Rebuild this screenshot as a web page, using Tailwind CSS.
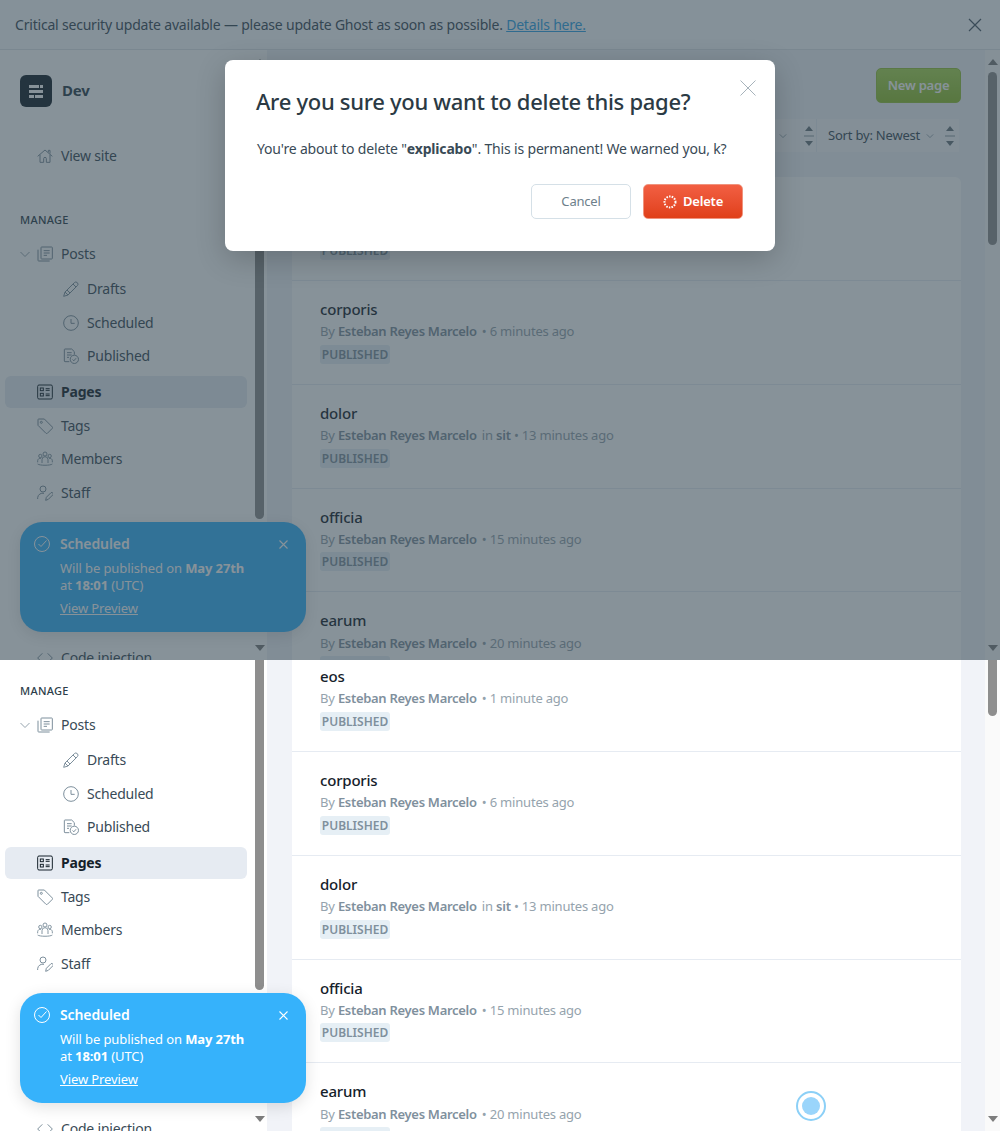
<!DOCTYPE html>
<html lang="en">
<head>
	<meta charset="UTF-8">
	<meta name="viewport" content="width=device-width, initial-scale=1.0">
	<script src="https://cdn.jsdelivr.net/npm/@tailwindcss/browser@4"></script>
	<title>Ghost Admin - Pages</title>
</head>
<body class="bg-white w-[1000px] font-['Noto_Sans','Open_Sans',sans-serif] tracking-[-0.2px] text-[#394a56]">

<!-- Top half: page with the delete modal open -->
<section class="relative h-[660px] overflow-hidden">
	<div id="page" class="h-[660px] flex flex-col">
		<!-- Update banner -->
		<div class="h-[50px] shrink-0 flex items-center justify-between pl-[15px] pr-[18px] bg-[#f9fcff] border-b border-[#dfe5ea] text-sm">
			<p>Critical security update available — please update Ghost as soon as possible. <a class="text-[#30a3e6] underline">Details here.</a></p>
			<svg class="w-[14px] h-[14px]" viewBox="0 0 14 14" fill="none" stroke="#4a5a66" stroke-width="1.2"><path d="M1 1l12 12M13 1L1 13"/></svg>
		</div>

		<div class="flex flex-1 min-h-0">
			<!-- Sidebar -->
			<aside class="w-[267px] shrink-0 flex bg-white">
				<nav class="w-[252px] overflow-hidden text-sm">
					<div class="flex items-center gap-[10px] pl-5 pt-[25px]">
						<div class="w-8 h-8 rounded-md bg-[#15212a] flex flex-col justify-center items-center gap-[2px]">
							<span class="flex gap-[1px]"><i class="block w-[10px] h-[3px] bg-white"></i><i class="block w-[3px] h-[3px] bg-white"></i></span>
							<span class="block w-[14px] h-[3px] bg-white"></span>
							<span class="flex gap-[1px]"><i class="block w-[5px] h-[3px] bg-white"></i><i class="block w-[8px] h-[3px] bg-white"></i></span>
						</div>
						<span class="text-[15px] font-bold text-[#2d3e4a]">Dev</span>
					</div>

					<a class="mt-8 h-[33px] flex items-center gap-2 pl-[37px]">
						<svg class="w-4 h-4" viewBox="0 0 24 24" fill="none" stroke="#7d8f9c" stroke-width="1.5"><path d="M1 12.500L12 3l11 9.500M4.500 10v11.500H10V16a2 2 0 0 1 4 0v5.500h5.500V10M17 6.500V3.500h2.500V8.500"/></svg>
						View site
					</a>

					<p class="mt-10 pl-5 h-4 leading-4 text-[11px] font-medium tracking-[0.3px] uppercase text-[#2d3e4a]">Manage</p>

					<a class="mt-[9px] h-[33px] flex items-center pl-5">
						<svg class="w-[10px] h-[10px] mr-[7px]" viewBox="0 0 10 10" fill="none" stroke="#95a3ad"><path d="M.5 3l4.500 4.500L9.500 3"/></svg>
						<svg class="w-4 h-4 mr-2" viewBox="0 0 24 24" fill="none" stroke="#7d8f9c" stroke-width="1.5"><rect x="6" y="1.500" width="17" height="18" rx="1"/><path d="M1.500 5.500V21.500a1 1 0 0 0 1 1H19M10 7h9M10 10.500h9M10 14h5"/></svg>
						Posts
					</a>
					<a class="mt-[2px] h-[33px] flex items-center gap-2 pl-[63px]">
						<svg class="w-4 h-4" viewBox="0 0 24 24" fill="none" stroke="#7d8f9c" stroke-width="1.5"><path d="M1 23l2-6.500L17 2.500a3 3 0 0 1 4.500 4.500L7.500 21zM15 4.500L19.500 9M3 16.500L7.500 21M6 13.500L10.500 18"/></svg>
						Drafts
					</a>
					<a class="mt-px h-[33px] flex items-center gap-2 pl-[63px]">
						<svg class="w-4 h-4" viewBox="0 0 24 24" fill="none" stroke="#7d8f9c" stroke-width="1.5"><circle cx="12" cy="12" r="11"/><path d="M12 6v6.500h5.500"/></svg>
						Scheduled
					</a>
					<a class="h-[33px] flex items-center gap-2 pl-[63px]">
						<svg class="w-4 h-4" viewBox="0 0 24 24" fill="none" stroke="#7d8f9c" stroke-width="1.5"><path d="M9.500 20.500H3a1 1 0 0 1-1-1V2.500a1 1 0 0 1 1-1h10l4 4V10M6 7h7M6 10.500h7M6 14h3"/><circle cx="17" cy="17" r="6.200"/><path d="M14.300 17.300l2 1.900 3.200-3.800"/></svg>
						Published
					</a>
					<a class="mt-[4px] ml-[5px] w-[242px] h-8 flex items-center gap-2 pl-8 rounded-md bg-[#e6ebf2] font-bold text-[#15212a]">
						<svg class="w-4 h-4" viewBox="0 0 24 24" fill="none" stroke="#15212a" stroke-width="1.5"><rect x="1" y="1.500" width="22" height="21" rx="2"/><rect x="5" y="6" width="4.500" height="4"/><rect x="5" y="14" width="4.500" height="4"/><path d="M13 7h6M13 9.500h6M13 15h6M13 17.500h6"/></svg>
						Pages
					</a>
					<a class="mt-px h-[33px] flex items-center gap-2 pl-[37px]">
						<svg class="w-4 h-4" viewBox="0 0 24 24" fill="none" stroke="#7d8f9c" stroke-width="1.5"><path d="M2.500 1.500h8.500L23 13.500a1.500 1.500 0 0 1 0 2L15.500 23a1.500 1.500 0 0 1-2 0L1.500 11V2.500a1 1 0 0 1 1-1z"/><circle cx="6.500" cy="6.500" r="1.500"/></svg>
						Tags
					</a>
					<a class="h-[33px] flex items-center gap-2 pl-[37px]">
						<svg class="w-4 h-4" viewBox="0 0 24 24" fill="none" stroke="#7d8f9c" stroke-width="1.4"><circle cx="12" cy="4.500" r="3"/><circle cx="5" cy="7.500" r="2.500"/><circle cx="19" cy="7.500" r="2.500"/><path d="M7.500 18v-5a4.500 4.500 0 0 1 9 0v5M1 17v-2.500a4 4 0 0 1 5-3.500M23 17v-2.500a4 4 0 0 0-5-3.500M1 19.500c3 2.500 19 2.500 22 0"/></svg>
						Members
					</a>
					<a class="mt-px h-[33px] flex items-center gap-2 pl-[37px]">
						<svg class="w-4 h-4" viewBox="0 0 24 24" fill="none" stroke="#7d8f9c" stroke-width="1.5"><circle cx="9" cy="6" r="4.500"/><path d="M1 21v-2a7.500 7.500 0 0 1 9.500-6.500M13 23l1-4.500 7-7a2.200 2.200 0 0 1 3 3l-7 7z"/></svg>
						Staff
					</a>
					<a class="mt-[132px] h-[33px] flex items-center gap-2 pl-[37px]">
						<svg class="w-4 h-4" viewBox="0 0 24 24" fill="none" stroke="#7d8f9c" stroke-width="1.5"><path d="M8 5l-7 7 7 7M16 5l7 7-7 7"/></svg>
						Code injection
					</a>
				</nav>
				<div class="w-[15px] shrink-0 flex flex-col items-center">
					<svg class="mt-[9px] w-[10px] h-[6px]" viewBox="0 0 10 6" fill="#7d7d7d"><path d="M5 0l5 6H0z"/></svg>
					<div class="mt-[7px] w-[9px] h-[447px] rounded-full bg-[#8e8e8e]"></div>
					<svg class="mt-auto mb-[9px] w-[10px] h-[6px]" viewBox="0 0 10 6" fill="#7d7d7d"><path d="M5 6l5-6H0z"/></svg>
				</div>
			</aside>

			<!-- Main -->
			<main class="flex-1 min-w-0 bg-[#f1f3f8] pl-[25px] pr-[24px] overflow-hidden">
				<div class="mt-[18px] h-[35px] flex items-center justify-between">
					<h1 class="text-2xl font-bold text-[#15212a]">Pages</h1>
					<button class="w-[85px] h-[35px] rounded-[5px] border border-[#94c23a] bg-gradient-to-b from-[#a9d850] to-[#8fbe2c] text-white text-[13px] font-semibold">New page</button>
				</div>
				<div class="mt-4 h-[33px] flex justify-end pr-[2px] text-[13px]">
					<div class="w-[142px] flex items-center justify-between pl-[51px] pr-[2px] bg-[#f7f8fb] border-r border-[#e6ebf2] whitespace-nowrap">
						<span class="flex items-center gap-[10px]">All tags
							<svg class="w-2 h-2" viewBox="0 0 10 10" fill="none" stroke="#95a3ad" stroke-width="1.2"><path d="M1 3l4 4 4-4"/></svg>
						</span>
						<svg class="w-[10px] h-[22px]" viewBox="0 0 10 22" fill="#69757d"><path d="M5 1l4 5H1zM5 21l4-5H1z"/><path d="M0 11h10" stroke="#8d99a1"/></svg>
					</div>
					<div class="w-[142px] flex items-center justify-between pl-[11px] pr-[4px] bg-[#f7f8fb]">
						<span class="flex items-center gap-[6px]">Sort by: Newest
							<svg class="w-2 h-2" viewBox="0 0 10 10" fill="none" stroke="#95a3ad" stroke-width="1.2"><path d="M1 3l4 4 4-4"/></svg>
						</span>
						<svg class="w-[10px] h-[22px]" viewBox="0 0 10 22" fill="#69757d"><path d="M5 1l4 5H1zM5 21l4-5H1z"/><path d="M0 11h10" stroke="#8d99a1"/></svg>
					</div>
				</div>
				<ul class="mt-[25px] bg-white rounded-t-md">
					<li class="h-[104px] pl-7 pt-[17px] border-b border-[#e6ebf2]">
						<h3 class="text-[15px] leading-[22px] font-medium text-[#15212a]">eos</h3>
						<p class="mt-[1px] text-[13px] leading-[20px] text-[#95a3ad]">By <b class="mr-[2px] font-semibold tracking-[-0.3px] text-[#7f909d]">Esteban Reyes Marcelo</b> • 1 minute ago</p>
						<span class="mt-[4px] block w-[70px] h-[19px] leading-[19px] text-center rounded-[3px] bg-[#e6eff5] text-xs font-semibold tracking-normal text-[#7f909d]">PUBLISHED</span>
					</li>
					<li class="h-[104px] pl-7 pt-[17px] border-b border-[#e6ebf2]">
						<h3 class="text-[15px] leading-[22px] font-medium text-[#15212a]">corporis</h3>
						<p class="mt-[1px] text-[13px] leading-[20px] text-[#95a3ad]">By <b class="mr-[2px] font-semibold tracking-[-0.3px] text-[#7f909d]">Esteban Reyes Marcelo</b> • 6 minutes ago</p>
						<span class="mt-[4px] block w-[70px] h-[19px] leading-[19px] text-center rounded-[3px] bg-[#e6eff5] text-xs font-semibold tracking-normal text-[#7f909d]">PUBLISHED</span>
					</li>
					<li class="h-[104px] pl-7 pt-[17px] border-b border-[#e6ebf2]">
						<h3 class="text-[15px] leading-[22px] font-medium text-[#15212a]">dolor</h3>
						<p class="mt-[1px] text-[13px] leading-[20px] text-[#95a3ad]">By <b class="mr-[2px] font-semibold tracking-[-0.3px] text-[#7f909d]">Esteban Reyes Marcelo</b> in <b class="font-semibold text-[#7f909d]">sit</b> • 13 minutes ago</p>
						<span class="mt-[4px] block w-[70px] h-[19px] leading-[19px] text-center rounded-[3px] bg-[#e6eff5] text-xs font-semibold tracking-normal text-[#7f909d]">PUBLISHED</span>
					</li>
					<li class="h-[103px] pl-7 pt-[17px] border-b border-[#e6ebf2]">
						<h3 class="text-[15px] leading-[22px] font-medium text-[#15212a]">officia</h3>
						<p class="mt-[1px] text-[13px] leading-[20px] text-[#95a3ad]">By <b class="mr-[2px] font-semibold tracking-[-0.3px] text-[#7f909d]">Esteban Reyes Marcelo</b> • 15 minutes ago</p>
						<span class="mt-[3px] block w-[70px] h-[19px] leading-[19px] text-center rounded-[3px] bg-[#e6eff5] text-xs font-semibold tracking-normal text-[#7f909d]">PUBLISHED</span>
					</li>
					<li class="h-[104px] pl-7 pt-[17px]">
						<h3 class="text-[15px] leading-[22px] font-medium text-[#15212a]">earum</h3>
						<p class="mt-[2px] text-[13px] leading-[20px] text-[#95a3ad]">By <b class="mr-[2px] font-semibold tracking-[-0.3px] text-[#7f909d]">Esteban Reyes Marcelo</b> • 20 minutes ago</p>
						<span class="mt-[3px] block w-[70px] h-[19px] leading-[19px] text-center rounded-[3px] bg-[#e6eff5] text-xs font-semibold tracking-normal text-[#7f909d]">PUBLISHED</span>
					</li>
				</ul>
			</main>

			<!-- Main scrollbar -->
			<div class="w-[15px] shrink-0 flex flex-col items-center bg-[#fafafa]">
				<svg class="mt-[9px] w-[10px] h-[6px]" viewBox="0 0 10 6" fill="#7d7d7d"><path d="M5 0l5 6H0z"/></svg>
				<div class="mt-[7px] w-[9px] h-[173px] rounded-full bg-[#8e8e8e]"></div>
				<svg class="mt-auto mb-[9px] w-[10px] h-[6px]" viewBox="0 0 10 6" fill="#7d7d7d"><path d="M5 6l5-6H0z"/></svg>
			</div>
		</div>

		<!-- Toast -->
		<div class="absolute left-5 top-[522px] w-[286px] h-[110px] rounded-[22px] bg-[#36b2fb] text-white shadow-[0_4px_16px_rgba(0,0,0,0.12)] text-[13px] tracking-[-0.1px] pl-10 pt-[12px]">
			<svg class="absolute left-[14px] top-[14px] w-4 h-4" viewBox="0 0 16 16" fill="none" stroke="#fff" stroke-width="1"><circle cx="8" cy="8" r="7.500"/><path d="M4.500 8l2.500 2.500 5.500-6"/></svg>
			<svg class="absolute right-[18px] top-[18px] w-[9px] h-[9px]" viewBox="0 0 9 9" fill="none" stroke="#fff" stroke-width="1.100"><path d="M.5.5l8 8M8.500.5l-8 8"/></svg>
			<p class="text-sm leading-5 font-semibold">Scheduled</p>
			<p class="mt-[6px] leading-[17px]">Will be published on <b class="font-bold">May 27th</b><br>at <b class="font-bold">18:01</b> (UTC)</p>
			<a class="mt-[5px] inline-block underline">View Preview</a>
		</div>
	</div>

	<!-- Modal backdrop -->
	<div class="absolute inset-0 bg-[#30434f]/58"></div>

	<!-- Delete modal -->
	<div class="absolute left-[225px] top-[60px] w-[550px] h-[191px] rounded-lg bg-white shadow-[0_8px_30px_rgba(0,0,0,0.2)] pl-[31px] pr-8 pt-[25px]">
		<svg class="absolute right-[19px] top-[20px] w-4 h-4" viewBox="0 0 16 16" fill="none" stroke="#a7b3bb"><path d="M.5.5l15 15M15.500.5l-15 15"/></svg>
		<h2 class="text-[22px] leading-[32px] font-medium tracking-[-0.3px] text-[#2b3a44]">Are you sure you want to delete this page?</h2>
		<p class="mt-[22px] pl-px text-sm leading-5 tracking-[-0.17px]">You're about to delete "<b class="font-bold">explicabo</b>". This is permanent! We warned you, k?</p>
		<div class="mt-[25px] flex justify-end gap-3">
			<button class="w-[100px] h-[35px] pt-px rounded-[5px] border border-[#d5e0e7] text-[13px] text-[#6e7f8b]">Cancel</button>
			<button class="w-[100px] h-[35px] pt-px rounded-[5px] border border-[#f0937d] bg-gradient-to-b from-[#f25f42] to-[#e03f18] text-white text-[13px] font-semibold flex items-center justify-center gap-[6px]">
				<svg class="w-[14px] h-[14px]" viewBox="0 0 14 14" fill="none" stroke="#fff" stroke-width="2"><circle cx="7" cy="7" r="5.500" stroke-dasharray="1.500 1.200"/></svg>
				Delete
			</button>
		</div>
	</div>
</section>

<!-- Bottom half: the same page without the modal, cut off at 189px -->
<section id="lower" class="relative h-[471px] overflow-hidden">
	<div id="lowerInner" class="relative -mt-[189px]"></div>
	<!-- Click ripple -->
	<div class="absolute left-[796px] top-[431px] w-[30px] h-[30px] rounded-full border-2 border-[#8cd0f7] flex items-center justify-center">
		<span class="block w-[18px] h-[18px] rounded-full bg-[#9ad5fb]"></span>
	</div>
</section>

<script>
	const copy = document.getElementById('page').cloneNode(true);
	copy.removeAttribute('id');
	document.getElementById('lowerInner').appendChild(copy);
</script>
</body>
</html>
